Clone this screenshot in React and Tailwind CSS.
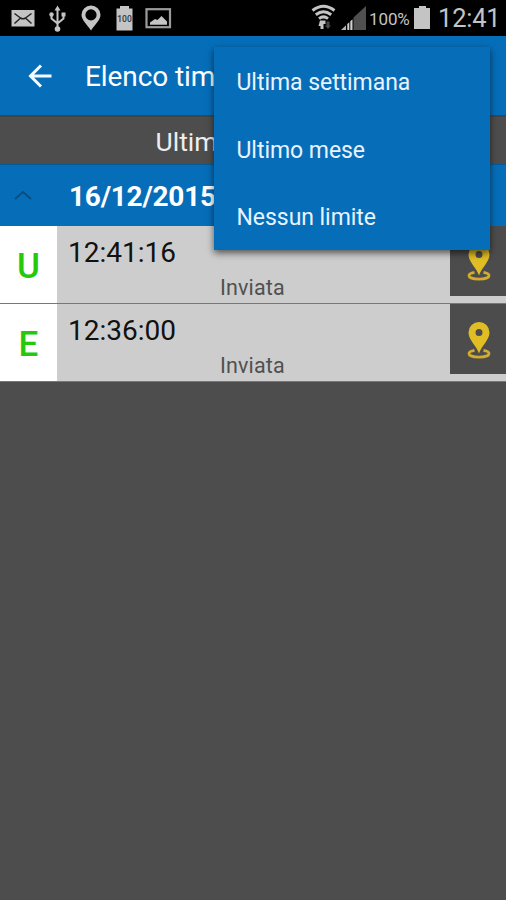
import React from "react";

const menuItems = ["Ultima settimana", "Ultimo mese", "Nessun limite"];
const entries = [
  { type: "U", time: "12:41:16", status: "Inviata" },
  { type: "E", time: "12:36:00", status: "Inviata" },
];

function StatusBar() {
  return (
    <div className="flex h-9 bg-black text-[#c4c4c4]">
      <svg className="h-9 w-[367px] shrink-0" viewBox="0 0 367 36" fill="none">
        <rect x="11.5" y="10" width="23" height="16.5" fill="#c4c4c4" />
        <path d="M14.500 13.500l6 4.500q2.500 1.500 5 0l6-4.500M14.500 23.500l5.500-5M31.500 23.500l-5.500-5" stroke="#222" strokeWidth="1.5" />
        <path d="M57.500 9v20M51.500 14.500v4l6 5M63.500 14.500v4l-6 5" stroke="#c4c4c4" strokeWidth="2" />
        <path d="M57.500 5.500l3 5h-6z" fill="#c4c4c4" />
        <circle cx="57.500" cy="29" r="2.800" fill="#c4c4c4" />
        <circle cx="51.500" cy="14.500" r="2.200" fill="#c4c4c4" />
        <rect x="61.500" y="12.500" width="4" height="4" fill="#c4c4c4" />
        <path fillRule="evenodd" d="M91 30.500C87 24.500 81.500 20 81.500 14.800a9.500 9.200 0 0 1 19 0C100.500 20 95 24.500 91 30.500zM91 9.300a5.600 5.600 0 1 0 0 11.200A5.600 5.600 0 0 0 91 9.300z" fill="#c4c4c4" />
        <path d="M120 6h9v2.500h3.500v22h-16v-22h3.500z" fill="#c4c4c4" />
        <text x="124.500" y="22.300" textAnchor="middle" fontSize="8.500" fontWeight="500" fontFamily="Roboto, sans-serif" fill="#333">100</text>
        <rect x="146.500" y="9.200" width="23.500" height="18" stroke="#9c9c9c" strokeWidth="2.200" />
        <path d="M150 24.800v-2.300l5-3.500 2.500 1 4-4 5.500 5.500v3.300z" fill="#c4c4c4" />
        <path d="M312.500 10.500q11-8.500 22 0M315.800 14.700q7.700-6 15.400 0M319 18.600q4.500-3.400 9 0" stroke="#c4c4c4" strokeWidth="3" />
        <path d="M320 20.500h5.500v3.500h-2V29h-3v-3h-2z" fill="#c4c4c4" />
        <path d="M326.500 21.500v4h-1.500l3 3.500 3-3.500h-1.500v-4z" fill="#484848" />
        <path d="M353.500 30V17.500L366 6v24z" fill="#505050" />
        <path d="M341 30l5-4.700V30z" fill="#b4b4b4" />
        <path d="M347.300 30v-6l2-1.700V30zM350.300 30v-8.700l2.200-2V30z" fill="#d0d0d0" />
      </svg>
      <span className="ml-[2px] w-[45px] shrink-0 pt-[7px] text-[17px] leading-6 tracking-[-0.1px]">100%</span>
      <svg className="h-9 w-[20px] shrink-0" viewBox="0 0 20 36">
        <path d="M5 6h7v2h4v21H0V8h5z" fill="#c4c4c4" />
      </svg>
      <span className="ml-[4px] whitespace-nowrap text-[25.5px] leading-[36px] tracking-[-0.2px]">12:41</span>
    </div>
  );
}

function Pin() {
  return (
    <svg className="h-[38px] w-[26px]" viewBox="0 0 26 38" fill="none">
      <path d="M8.500 28.300C4.500 29 3 30.300 3 31.500c0 2.200 4.500 3.700 10 3.700s10-1.500 10-3.700c0-1.200-1.500-2.500-5.500-3.200" stroke="#d3ac2e" strokeWidth="2.800" />
      <path fillRule="evenodd" d="M13 31.500C11 24.500 2.500 18 2.500 10.500a10.500 10.500 0 0 1 21 0C23.500 18 15 24.500 13 31.500zm0-24.500a3.500 3.500 0 1 0 0 7 3.500 3.500 0 0 0 0-7z" fill="#e1bd25" />
    </svg>
  );
}

function Entry({ type, time, status }) {
  return (
    <div className="flex h-[78px] border-b border-[#777] bg-[#cdcdcd]">
      <div className="flex w-[57px] shrink-0 items-center justify-center bg-white pt-[6px] text-[35px] font-medium text-[#24c90b]">
        {type}
      </div>
      <div className="w-[393px] shrink-0">
        <div className="pl-[11px] pt-[9px] text-[28px] leading-9 text-[#111]">{time}</div>
        <div className="pl-[163px] pt-[3px] text-[21.5px] leading-7 tracking-[0.15px] text-[#505050]">{status}</div>
      </div>
      <div className="flex h-[70px] w-14 items-center justify-center bg-[#4c4c4c] pl-[1px] pt-[4px]">
        <Pin />
      </div>
    </div>
  );
}

export default function App() {
  return (
    <div className="relative h-[900px] w-[506px] overflow-hidden bg-[#4d4d4d] font-['Roboto',sans-serif]">
      <StatusBar />
      <header className="flex h-[79px] items-center bg-[#066eb9] text-white">
        <svg className="ml-[28px] h-6 w-6" viewBox="0 0 24 24" fill="none" stroke="#f4faff" strokeWidth="3">
          <path d="M23.500 12H2.500M13 1.500L2.500 12 13 22.500" />
        </svg>
        <h1 className="ml-[33px] whitespace-nowrap pt-[2px] text-[28px] font-normal tracking-[-0.1px]">Elenco tim</h1>
      </header>
      <div className="flex h-[49px] items-center whitespace-nowrap border-t-2 border-[#444] pl-[155.5px] pt-[2px] text-[26.5px] text-[#eee]">
        Ultim
      </div>
      <div className="flex h-[62px] items-center border-t border-[#075a96] bg-[#066eb9]">
        <svg className="ml-[14px] h-3 w-[18px]" viewBox="0 0 18 12" fill="none" stroke="#0a4d7e" strokeWidth="1.8">
          <path d="M1 9l8-7 8 7" />
        </svg>
        <span className="ml-[37px] whitespace-nowrap pt-[2px] text-[28px] font-bold tracking-[-0.25px] text-white">16/12/2015</span>
      </div>
      <div>
        {entries.map((entry) => (
          <Entry key={entry.time} {...entry} />
        ))}
      </div>
      <div className="absolute left-[214px] top-[47px] h-[203px] w-[276px] bg-[#066eb9] shadow-[0_3px_7px_rgba(0,0,0,0.6)]">
        {menuItems.map((item) => (
          <div key={item} className="flex h-[67.5px] items-center whitespace-nowrap pl-[22.5px] pt-[5px] text-[23px] tracking-[-0.05px] text-[#e9f3ff]">
            {item}
          </div>
        ))}
      </div>
    </div>
  );
}
